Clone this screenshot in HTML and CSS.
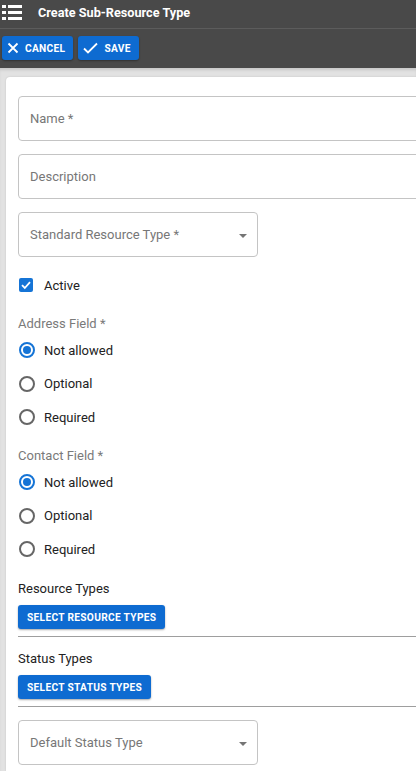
FILE: index.html
```html
<!DOCTYPE html>
<html>
<head>
<meta charset="utf-8">
<link rel="stylesheet" href="styles.css">
</head>
<body>
<header class="topbar">
  <svg class="menu-icon" width="22" height="20" viewBox="0 0 22 20">
    <rect x="2" y="2" width="4" height="3" fill="#fff"/>
    <rect x="8" y="2" width="14" height="3" fill="#fff"/>
    <rect x="2" y="8" width="4" height="3" fill="#fff"/>
    <rect x="8" y="8" width="14" height="3" fill="#fff"/>
    <rect x="2" y="14" width="4" height="3" fill="#fff"/>
    <rect x="8" y="14" width="14" height="3" fill="#fff"/>
  </svg>
  <h1 class="title">Create Sub-Resource Type</h1>
</header>
<div class="toolbar">
  <button class="btn">
    <svg width="12" height="12" viewBox="0 0 12 12"><path d="M1.5 1.5 L10.5 10.5 M10.5 1.5 L1.5 10.5" stroke="#fff" stroke-width="1.8" fill="none"/></svg>
    <span>CANCEL</span>
  </button>
  <button class="btn">
    <svg width="15" height="12" viewBox="0 0 15 12"><path d="M1 6.5 L5 10.5 L14 1.5" stroke="#fff" stroke-width="1.8" fill="none"/></svg>
    <span>SAVE</span>
  </button>
</div>
<main class="content">
  <section class="card">
    <div class="field wide"><span class="placeholder">Name *</span></div>
    <div class="field wide"><span class="placeholder">Description</span></div>
    <div class="field select"><span class="placeholder">Standard Resource Type *</span><span class="caret"></span></div>

    <label class="check-row">
      <span class="checkbox"><svg width="14" height="14" viewBox="0 0 14 14"><path d="M3 7.2 L5.8 10 L11 4.2" stroke="#fff" stroke-width="1.8" fill="none"/></svg></span>
      <span class="opt-text">Active</span>
    </label>

    <div class="group-label">Address Field *</div>
    <div class="radio-row"><span class="radio checked"></span><span class="opt-text">Not allowed</span></div>
    <div class="radio-row"><span class="radio"></span><span class="opt-text">Optional</span></div>
    <div class="radio-row"><span class="radio"></span><span class="opt-text">Required</span></div>

    <div class="group-label">Contact Field *</div>
    <div class="radio-row"><span class="radio checked"></span><span class="opt-text">Not allowed</span></div>
    <div class="radio-row"><span class="radio"></span><span class="opt-text">Optional</span></div>
    <div class="radio-row"><span class="radio"></span><span class="opt-text">Required</span></div>

    <div class="section-label first">Resource Types</div>
    <button class="btn small">SELECT RESOURCE TYPES</button>
    <hr class="divider">
    <div class="section-label">Status Types</div>
    <button class="btn small">SELECT STATUS TYPES</button>
    <hr class="divider">
    <div class="field select last"><span class="placeholder">Default Status Type</span><span class="caret"></span></div>
  </section>
</main>
</body>
</html>
```
FILE: styles.css
```css
* { box-sizing: border-box; }
html, body { margin: 0; padding: 0; }
body {
  width: 416px;
  height: 771px;
  overflow: hidden;
  font-family: Roboto, "Liberation Sans", sans-serif;
  background: #e2e2e2;
}
.topbar {
  height: 29px;
  background: #494949;
  border-bottom: 1px solid #5c5c5c;
  display: flex;
  align-items: center;
}
.menu-icon { flex: none; margin-top: -2px; }
.title {
  margin: -4px 0 0 16px;
  color: #fff;
  font-size: 12.7px;
  font-weight: 700;
}
.toolbar {
  height: 39px;
  background: #494949;
  display: flex;
  align-items: flex-start;
  gap: 5px;
  padding: 7px 0 0 2px;
}
.btn {
  border: none;
  background: #0e6bd1;
  color: #fff;
  font-family: Roboto, "Liberation Sans", sans-serif;
  font-weight: 700;
  font-size: 10.2px;
  letter-spacing: 0.3px;
  border-radius: 3px;
  height: 24px;
  padding: 0 8px 0 5px;
  display: flex;
  align-items: center;
  gap: 6px;
  box-shadow: 0 1px 2px rgba(0,0,0,0.35);
  cursor: pointer;
}
.content {
  padding: 9px 0 0 6px;
  box-shadow: inset 0 3px 3px -1px rgba(0,0,0,0.12);
  height: 703px;
  overflow: hidden;
}
.card {
  background: #fff;
  border-top-left-radius: 4px;
  width: 410px;
  height: 100%;
  padding: 19px 0 0 12px;
  box-shadow: 0 0 2px rgba(0,0,0,0.15);
  overflow: hidden;
}
.field {
  height: 45px;
  border: 1px solid #c4c4c4;
  border-radius: 4px;
  display: flex;
  align-items: center;
  padding: 0 11px;
  margin-bottom: 13px;
  position: relative;
}
.field.wide { width: 440px; }
.field.select { width: 240px; margin-bottom: 0; }
.field.last { margin-top: 13px; }
.placeholder {
  font-size: 13px;
  color: #777;
}
.caret {
  position: absolute;
  right: 10px;
  top: 21px;
  width: 0; height: 0;
  border-left: 4.5px solid transparent;
  border-right: 4.5px solid transparent;
  border-top: 4.5px solid #757575;
}
.check-row {
  display: flex;
  align-items: center;
  margin-top: 20px;
  height: 16px;
  padding-left: 1px;
}
.checkbox {
  width: 14px; height: 14px;
  background: #1574d6;
  border-radius: 2px;
  display: flex;
  margin-right: 11px;
}
.opt-text {
  font-size: 13px;
  color: #222;
}
.group-label {
  font-size: 13px;
  color: #7a7a7a;
  margin-top: 23px;
  height: 16px;
  line-height: 16px;
}
.group-label + .radio-row { margin-top: 10px; }
.radio-row {
  display: flex;
  align-items: center;
  height: 16px;
  margin-top: 17.5px;
  padding-left: 1px;
}
.radio {
  width: 16px; height: 16px;
  border: 2px solid #666;
  border-radius: 50%;
  margin-right: 9px;
  position: relative;
}
.radio.checked { border-color: #1574d6; }
.radio.checked::after {
  content: "";
  position: absolute;
  left: 2px; top: 2px;
  width: 8px; height: 8px;
  border-radius: 50%;
  background: #1574d6;
}
.section-label {
  font-size: 13px;
  color: #222;
  margin-top: 14px;
  height: 16px;
  line-height: 16px;
}
.section-label.first { margin-top: 24px; }
.btn.small {
  margin-top: 8px;
  padding: 0 9px;
}
.divider {
  border: none;
  border-top: 1px solid #9e9e9e;
  margin: 7px 0 0 0;
}
```
